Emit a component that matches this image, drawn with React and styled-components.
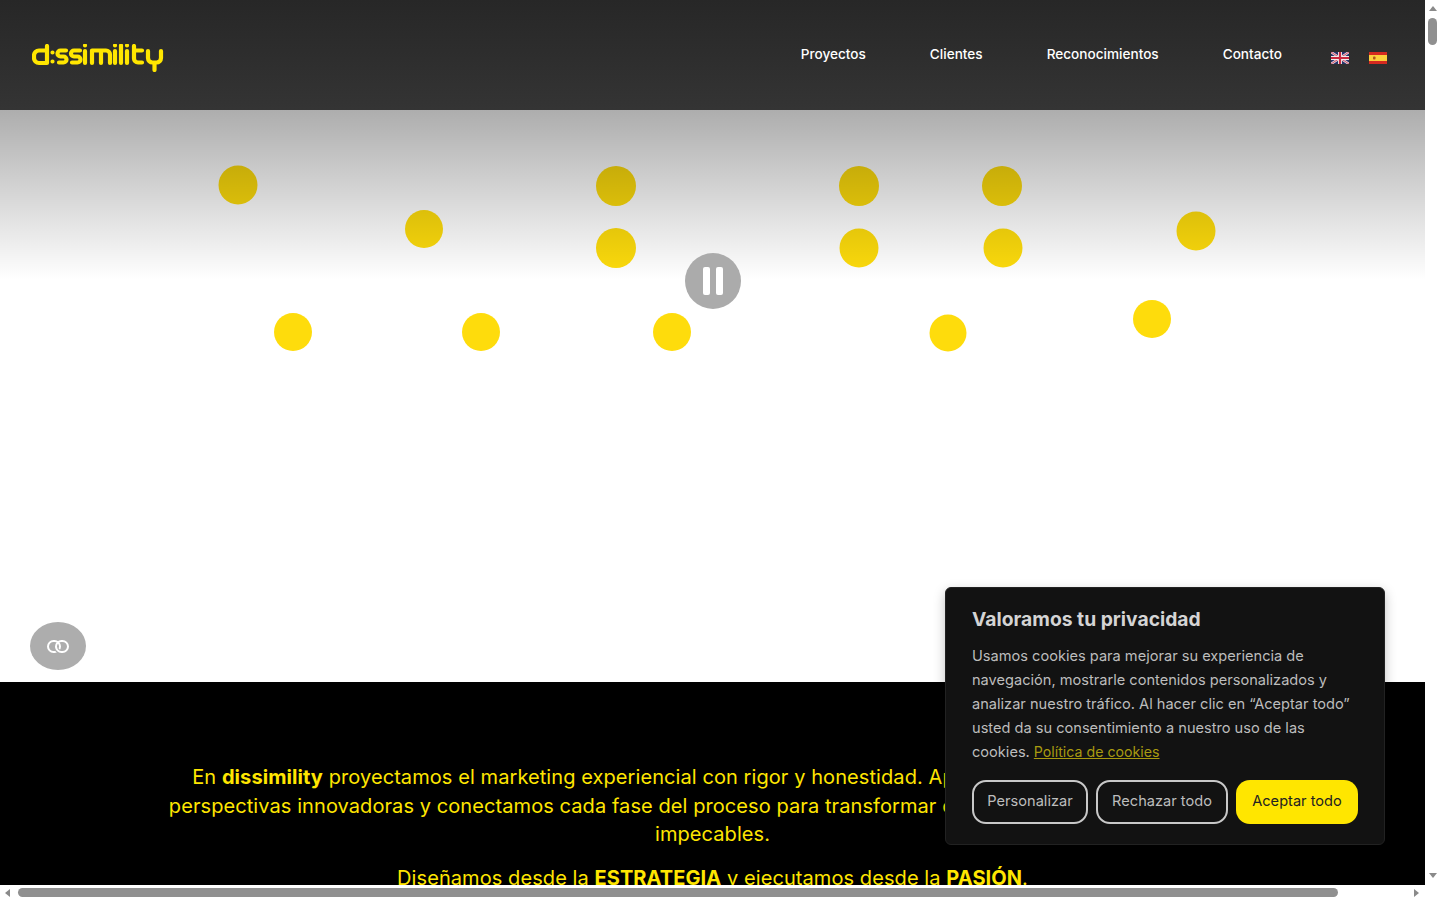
import React from 'react';
import styled, {createGlobalStyle} from 'styled-components';

const GlobalStyle = createGlobalStyle`
    html, body {
        margin: 0;
        height: 100%;
        overflow: hidden;
        background: #fff;
        font-family: Inter, "Liberation Sans", sans-serif;
    }
`;

const Shell = styled.div`
    position: relative;
    height: 100vh;
    display: grid;
    grid-template-columns: 1fr 15px;
    grid-template-rows: 1fr 15px;
    overflow: hidden;
`;

const Viewport = styled.main`
    overflow: hidden;
    min-width: 0;
    min-height: 0;
`;

const VerticalBar = styled.div`
    display: flex;
    flex-direction: column;
    align-items: center;
    padding: 6px 0 7px;
    box-sizing: border-box;
    background: #fff;
`;

const HorizontalBar = styled.div`
    grid-column: 1 / 3;
    display: flex;
    align-items: center;
    padding: 0 21px 0 5px;
    box-sizing: border-box;
    background: #fff;
`;

const ArrowUp = styled.span`
    width: 0;
    height: 0;
    border: 4.5px solid transparent;
    border-top: 0;
    border-bottom: 5px solid #8a8a8a;
`;

const ArrowDown = styled(ArrowUp)`
    margin-top: auto;
    transform: rotate(180deg);
`;

const ArrowLeft = styled.span`
    width: 0;
    height: 0;
    border: 4.5px solid transparent;
    border-left: 0;
    border-right: 5px solid #8a8a8a;
`;

const ArrowRight = styled(ArrowLeft)`
    margin-left: auto;
    transform: rotate(180deg);
`;

const VerticalThumb = styled.span`
    width: 9px;
    height: 27px;
    margin-top: 7px;
    border-radius: 5px;
    background: #909090;
`;

const HorizontalThumb = styled.span`
    width: 1320px;
    height: 9px;
    margin-left: 8px;
    border-radius: 5px;
    background: #909090;
`;

const Header = styled.header`
    height: 110px;
    box-sizing: border-box;
    padding: 0 38px 0 32px;
    display: flex;
    align-items: center;
    justify-content: space-between;
    background: linear-gradient(#272727, #343434);
`;

const Logo = styled.svg`
    display: block;
    width: 132px;
    height: 28px;
    margin-top: 5px;
`;

const NavArea = styled.div`
    display: flex;
    align-items: center;
`;

const Nav = styled.nav`
    display: flex;
    gap: 64px;
    margin-top: -2px;
`;

const NavLink = styled.a`
    color: #fff;
    font-size: 13.6px;
    font-weight: 500;
    white-space: nowrap;
`;

const Flags = styled.div`
    display: flex;
    gap: 20px;
    margin-left: 49px;
    margin-top: 5px;
`;

const Flag = styled.svg`
    display: block;
    width: 18px;
    height: 12px;
`;

const Hero = styled.section`
    position: relative;
    height: 572px;
    background: #fff;
`;

const Shade = styled.div`
    position: absolute;
    top: 0;
    left: 0;
    right: 0;
    height: 170px;
    background: linear-gradient(rgba(0, 0, 0, 0.32), rgba(0, 0, 0, 0));
    pointer-events: none;
`;

const Dot = styled.span`
    position: absolute;
    border-radius: 50%;
    background: #fedc0c;
    transform: translate(-50%, -50%);
`;

const PauseButton = styled.button`
    position: absolute;
    left: 685px;
    top: 143px;
    width: 56px;
    height: 56px;
    padding: 0;
    border: 0;
    border-radius: 50%;
    background: #ababab;
    display: flex;
    align-items: center;
    justify-content: center;
    gap: 6px;
`;

const PauseBar = styled.span`
    width: 7px;
    height: 28px;
    border-radius: 2px;
    background: #fff;
`;

const LinkButton = styled.button`
    position: absolute;
    left: 30px;
    bottom: 12px;
    width: 56px;
    height: 48px;
    padding: 0;
    border: 0;
    border-radius: 50%;
    background: #adadad;
    display: flex;
    align-items: center;
    justify-content: center;
`;

const Intro = styled.section`
    background: #000;
    padding: 81px 0 200px;
    text-align: center;
    color: #ffe600;
    font-size: 20px;
    line-height: 28.5px;
    letter-spacing: 0.08px;
`;

const IntroText = styled.p`
    margin: 0 0 15px;
    white-space: nowrap;

    strong {
        font-weight: 700;
    }
`;

const Cookie = styled.aside`
    position: absolute;
    right: 55px;
    bottom: 55px;
    width: 440px;
    height: 258px;
    box-sizing: border-box;
    padding: 19px 26px 0;
    border: 1px solid #222;
    border-radius: 6px;
    background: #121212;
    color: #bdbdbd;
    box-shadow: 0 4px 12px rgba(0, 0, 0, 0.25);
`;

const CookieTitle = styled.h3`
    margin: 0 0 13px;
    font-size: 19.3px;
    line-height: 24px;
    font-weight: 700;
    color: #d4d4d4;
`;

const CookieText = styled.p`
    margin: 0;
    font-size: 14.6px;
    line-height: 24px;
    white-space: nowrap;

    a {
        margin-left: 4px;
        color: #a89a10;
        font-size: 14.2px;
        text-decoration: underline;
    }
`;

const CookieButtons = styled.div`
    display: flex;
    gap: 8px;
    margin-top: 16px;
`;

const CookieButton = styled.button`
    height: 44px;
    box-sizing: border-box;
    width: ${p => p.$w}px;
    padding: 0 0 2px;
    border-radius: 14px;
    border: ${p => p.$primary ? '0' : '2px solid #c8c8c8'};
    background: ${p => p.$primary ? '#ffe600' : 'transparent'};
    color: ${p => p.$primary ? '#222' : '#bdbdbd'};
    font-family: inherit;
    font-size: 14.6px;
`;

const dots = [
    [237.5, 75, 39], [423.5, 119, 38], [615.5, 75.5, 40], [616, 138, 40],
    [858.5, 75.5, 40], [858.5, 138, 39], [1002, 75.5, 40], [1002.5, 138, 39],
    [1196, 120.5, 39], [293, 222, 38], [480.5, 222, 38], [672, 222, 38],
    [947.5, 223, 37], [1151.5, 209, 38],
];

const LogoMark = () => (
    <Logo viewBox="0 0 132 28" fill="none" stroke="#ffe600" strokeWidth="4.200" strokeLinecap="round" strokeLinejoin="round" role="img" aria-label="dissimility">
        <path d="M15 2v17H7a5 5 0 0 1-5-5v-2.500a5 5 0 0 1 5-5h8" />
        <path d="M20.500 8.500v.01M20.500 17.500v.01" />
        <path d="M34 6.500h-5.500a3 3 0 0 0 0 6h3a3 3 0 0 1 0 6H27" />
        <path d="M48 6.500h-6a3 3 0 0 0 0 6h3.500a3 3 0 0 1 0 6H40" />
        <path d="M53 7v12M53 1.500v.01" />
        <path d="M60 19V6.500h14a4 4 0 0 1 4 4V19M69 7v12" />
        <path d="M83 7v12M83 1.500v.01" />
        <path d="M89 1.500V19" />
        <path d="M95 7v12M95 1.500v.01" />
        <path d="M102 2v12.500a4 4 0 0 0 4 4h4M102 6.500h8" />
        <path d="M116 7v7a4.500 4.500 0 0 0 4.500 4.500h4a4.500 4.500 0 0 0 4.500-4.500V7M122.500 18.500V26" />
    </Logo>
);

const UkFlag = () => (
    <Flag viewBox="0 0 18 12">
        <rect width="18" height="12" fill="#26336b" />
        <path d="M0 0l18 12M18 0L0 12" stroke="#e8d5dc" strokeWidth="2.400" />
        <path d="M0 0l18 12M18 0L0 12" stroke="#c9304a" strokeWidth="0.800" />
        <path d="M9 0v12M0 6h18" stroke="#eee" strokeWidth="4" />
        <path d="M9 0v12M0 6h18" stroke="#c9283f" strokeWidth="2.200" />
    </Flag>
);

const EsFlag = () => (
    <Flag viewBox="0 0 18 12">
        <rect width="18" height="12" fill="#d42a20" />
        <rect y="3" width="18" height="6" fill="#fbd03c" />
        <rect x="4" y="4.500" width="2.500" height="3" rx="0.800" fill="#b5561f" />
    </Flag>
);

const ChainIcon = () => (
    <svg width="24" height="15" viewBox="0 0 24 15" fill="none" stroke="#fff" strokeWidth="2">
        <rect x="10" y="2" width="12" height="11" rx="5.500" />
        <rect x="2" y="2" width="12" height="11" rx="5.500" />
        <path d="M10 8.500a5.500 5.500 0 0 0 5 4.500" stroke="#adadad" strokeWidth="4" />
        <path d="M10 7.500a5.500 5.500 0 0 0 5.500 5.500" />
    </svg>
);

export default function App() {
    return (
        <Shell>
            <GlobalStyle />
            <Viewport>
                <Header>
                    <LogoMark />
                    <NavArea>
                        <Nav>
                            <NavLink>Proyectos</NavLink>
                            <NavLink>Clientes</NavLink>
                            <NavLink>Reconocimientos</NavLink>
                            <NavLink>Contacto</NavLink>
                        </Nav>
                        <Flags>
                            <UkFlag />
                            <EsFlag />
                        </Flags>
                    </NavArea>
                </Header>
                <Hero>
                    {dots.map(([x, y, d]) => (
                        <Dot key={`${x}-${y}`} style={{left: x, top: y, width: d, height: d}} />
                    ))}
                    <Shade />
                    <PauseButton aria-label="Pausa">
                        <PauseBar />
                        <PauseBar />
                    </PauseButton>
                    <LinkButton aria-label="Enlaces">
                        <ChainIcon />
                    </LinkButton>
                </Hero>
                <Intro>
                    <IntroText>
                        En <strong>dissimility</strong> proyectamos el marketing experiencial con rigor y honestidad. Aportamos ideas claras, nuevas<br />
                        perspectivas innovadoras y conectamos cada fase del proceso para transformar cada buena idea en experiencias<br />
                        impecables.
                    </IntroText>
                    <IntroText>
                        Diseñamos desde la <strong>ESTRATEGIA</strong> y ejecutamos desde la <strong>PASIÓN</strong>.
                    </IntroText>
                </Intro>
            </Viewport>
            <VerticalBar>
                <ArrowUp />
                <VerticalThumb />
                <ArrowDown />
            </VerticalBar>
            <HorizontalBar>
                <ArrowLeft />
                <HorizontalThumb />
                <ArrowRight />
            </HorizontalBar>
            <Cookie>
                <CookieTitle>Valoramos tu privacidad</CookieTitle>
                <CookieText>
                    Usamos cookies para mejorar su experiencia de<br />
                    navegación, mostrarle contenidos personalizados y<br />
                    analizar nuestro tráfico. Al hacer clic en “Aceptar todo”<br />
                    usted da su consentimiento a nuestro uso de las<br />
                    cookies.<a>Política de cookies</a>
                </CookieText>
                <CookieButtons>
                    <CookieButton $w={116}>Personalizar</CookieButton>
                    <CookieButton $w={132}>Rechazar todo</CookieButton>
                    <CookieButton $w={122} $primary>Aceptar todo</CookieButton>
                </CookieButtons>
            </Cookie>
        </Shell>
    );
}
